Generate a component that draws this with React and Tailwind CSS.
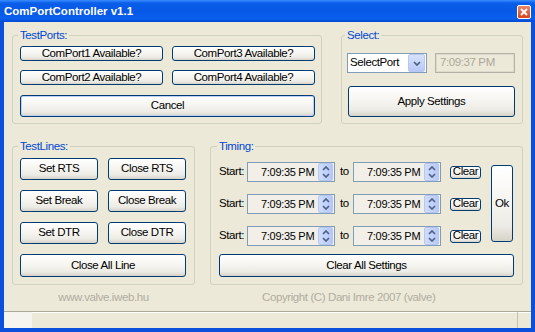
import React from 'react';

const Button = ({ children, className = '' }) => (
  <button
    type="button"
    className={`flex items-center justify-center whitespace-nowrap rounded-[3px] border border-[#003c74] bg-[linear-gradient(180deg,#ffffff_0%,#f6f5f1_45%,#ecebe5_80%,#d6d2c7_100%)] leading-none text-black ${className}`}
  >
    {children}
  </button>
);

const Group = ({ label, className = '', children }) => (
  <fieldset className={`rounded-[3px] border border-[#d0d0bf] ${className}`}>
    <legend className="-ml-[2px] px-[2px] leading-[13px] text-[#0046d5]">{label}</legend>
    {children}
  </fieldset>
);

const Chevron = ({ up }) => (
  <svg width="8" height="5" viewBox="0 0 8 5">
    <path d={up ? 'M1 4 L4 1 L7 4' : 'M1 1 L4 4 L7 1'} fill="none" stroke="#4d6185" strokeWidth="1.7" />
  </svg>
);

const Spin = () => (
  <div className="flex h-[18px] w-[15px] flex-col items-center justify-center gap-[2px] rounded-[2px] border border-[#b7c8f0] bg-[linear-gradient(90deg,#cfdcfb,#b6c8f6)]">
    <Chevron up />
    <Chevron />
  </div>
);

const TimePicker = () => (
  <div className="flex h-[20px] w-[88px] items-center justify-between whitespace-nowrap border border-[#7f9db9] bg-[#f1efe8] pl-[13px] pr-[1px] text-[11px] tracking-[-0.3px]">
    <span>7:09:35 PM</span>
    <Spin />
  </div>
);

const TimingRow = () => (
  <div className="flex h-[28px] items-center whitespace-nowrap">
    <span className="w-[28px]">Start:</span>
    <TimePicker />
    <span className="ml-[5px] w-[13px]">to</span>
    <TimePicker />
    <Button className="ml-[9px] h-[13px] w-[31px] rounded-[2px]">Clear</Button>
  </div>
);

const TitleBar = () => (
  <div className="flex h-[22px] items-center justify-between bg-[linear-gradient(180deg,#3a8cff_0%,#0a5ee8_14%,#0758e6_50%,#0a60ee_85%,#0048d0_100%)] pl-[4px] pr-[4px] pt-[1px]">
    <span className="font-['Liberation_Sans',sans-serif] text-[11.5px] font-bold tracking-normal text-white">ComPortController v1.1</span>
    <div className="flex h-[14px] w-[14px] items-center justify-center rounded-[2px] border border-white bg-[linear-gradient(180deg,#e9866a,#d9431e)]">
      <svg width="8" height="8" viewBox="0 0 8 8">
        <path d="M1 1 L7 7 M7 1 L1 7" stroke="#fff" strokeWidth="1.8" />
      </svg>
    </div>
  </div>
);

export default function App() {
  return (
    <div className="flex h-[332px] w-[535px] flex-col overflow-hidden bg-[#0a50dd] font-['Liberation_Sans',sans-serif] text-[11.5px] tracking-[-0.4px] text-black">
      <TitleBar />
      <div className="mx-[4px] mb-[4px] flex flex-1 flex-col bg-[#ece9d8]">
        <div className="flex flex-col gap-[16px] px-[8px] pt-[7px]">
          <div className="flex gap-[19px]">
            <Group label="TestPorts:" className="h-[95px] w-[310px] pl-[7px] pt-[4px]">
              <div className="grid grid-cols-[143px_143px] gap-x-[9px] gap-y-[9px]">
                <Button className="h-[15px]">ComPort1 Available?</Button>
                <Button className="h-[15px]">ComPort3 Available?</Button>
                <Button className="h-[15px]">ComPort2 Available?</Button>
                <Button className="h-[15px]">ComPort4 Available?</Button>
              </div>
              <Button className="mt-[10px] h-[22px] w-[295px] shadow-[inset_0_0_0_1px_#bcd0f6]">Cancel</Button>
            </Group>
            <Group label="Select:" className="h-[95px] w-[182px] pl-[5px] pt-[11px]">
              <div className="flex gap-[8px]">
                <div className="flex h-[20px] w-[80px] items-center justify-between border border-[#7f9db9] bg-white pl-[2px] pr-[1px]">
                  <span>SelectPort</span>
                  <div className="flex h-[18px] w-[17px] items-center justify-center rounded-[2px] border border-[#b7c8f0] bg-[linear-gradient(180deg,#d6e1fc,#b6c8f6)]">
                    <Chevron />
                  </div>
                </div>
                <div className="flex h-[20px] w-[80px] items-center border border-[#b5b2a5] bg-[#ece9d8] pl-[4px] text-[#aca899] shadow-[inset_0_0_0_1px_#dedbcd]">
                  7:09:37 PM
                </div>
              </div>
              <Button className="ml-[1px] mt-[13px] h-[31px] w-[167px]">Apply Settings</Button>
            </Group>
          </div>
          <div className="flex gap-[15px]">
            <Group label="TestLines:" className="h-[145px] w-[183px] pl-[7px] pt-[5px]">
              <div className="grid grid-cols-[78px_78px] gap-x-[10px] gap-y-[10px]">
                <Button className="h-[22px]">Set RTS</Button>
                <Button className="h-[22px]">Close RTS</Button>
                <Button className="h-[22px]">Set Break</Button>
                <Button className="h-[22px]">Close Break</Button>
                <Button className="h-[22px]">Set DTR</Button>
                <Button className="h-[22px]">Close DTR</Button>
              </div>
              <Button className="mt-[10px] h-[23px] w-[166px]">Close All Line</Button>
            </Group>
            <Group label="Timing:" className="h-[145px] w-[313px] pl-[8px] pr-[7px] pt-[5px]">
              <div className="flex">
                <div className="flex flex-col gap-[4px]">
                  <TimingRow />
                  <TimingRow />
                  <TimingRow />
                </div>
                <Button className="ml-[10px] mt-[7px] h-[77px] w-[22px]">Ok</Button>
              </div>
              <Button className="mt-[4px] h-[23px] w-[295px]">Clear All Settings</Button>
            </Group>
          </div>
        </div>
        <div className="flex h-[26px] items-center px-[8px] text-[#b0ad9f]">
          <span className="w-[183px] text-center">www.valve.iweb.hu</span>
          <span className="ml-[67px]">Copyright (C) Dani Imre 2007 (valve)</span>
        </div>
        <div className="flex flex-1 border-t border-[#aca899] shadow-[inset_0_1px_0_#ffffff]">
          <div className="w-[28px] bg-[#f5f4ee]" />
          <div className="flex-1" />
          <div className="mr-[13px] w-px bg-[#c5c2b2]" />
        </div>
      </div>
    </div>
  );
}
